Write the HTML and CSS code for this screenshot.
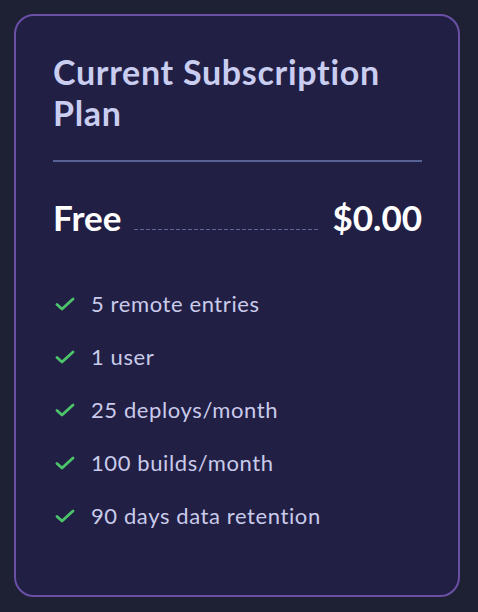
FILE: index.html
```html
<!DOCTYPE html>
<html>
<head>
<meta charset="utf-8">
<link rel="stylesheet" href="styles.css">
</head>
<body>
<div class="card">
  <h2 class="title">Current Subscription Plan</h2>
  <div class="divider"></div>
  <div class="plan">
    <span class="plan-name">Free</span>
    <span class="leader"></span>
    <span class="plan-price">$0.00</span>
  </div>
  <ul class="features">
    <li><svg class="check" viewBox="0 0 20 14" width="20" height="14"><path d="M2 7.5 L7 12 L18 2" fill="none" stroke="#4cc46a" stroke-width="2.8" stroke-linecap="round" stroke-linejoin="round"/></svg><span>5 remote entries</span></li>
    <li><svg class="check" viewBox="0 0 20 14" width="20" height="14"><path d="M2 7.5 L7 12 L18 2" fill="none" stroke="#4cc46a" stroke-width="2.8" stroke-linecap="round" stroke-linejoin="round"/></svg><span>1 user</span></li>
    <li><svg class="check" viewBox="0 0 20 14" width="20" height="14"><path d="M2 7.5 L7 12 L18 2" fill="none" stroke="#4cc46a" stroke-width="2.8" stroke-linecap="round" stroke-linejoin="round"/></svg><span>25 deploys/month</span></li>
    <li><svg class="check" viewBox="0 0 20 14" width="20" height="14"><path d="M2 7.5 L7 12 L18 2" fill="none" stroke="#4cc46a" stroke-width="2.8" stroke-linecap="round" stroke-linejoin="round"/></svg><span>100 builds/month</span></li>
    <li><svg class="check" viewBox="0 0 20 14" width="20" height="14"><path d="M2 7.5 L7 12 L18 2" fill="none" stroke="#4cc46a" stroke-width="2.8" stroke-linecap="round" stroke-linejoin="round"/></svg><span>90 days data retention</span></li>
  </ul>
</div>
</body>
</html>
```

FILE: styles.css
```css
html, body {
  margin: 0;
  padding: 0;
  background: #1e2133;
}
body {
  padding: 14px 18px 15px 14px;
  font-family: Lato, "Noto Sans", sans-serif;
}
.card {
  box-sizing: border-box;
  width: 446px;
  height: 583px;
  background: #221f45;
  border: 2px solid #6a4fa6;
  border-radius: 20px;
  padding: 35px 36px 0 37px;
}
.title {
  margin: 0;
  font-size: 34px;
  line-height: 41px;
  font-weight: 700;
  color: #c9cdf0;
  letter-spacing: 0.7px;
}
.divider {
  height: 2px;
  background: #586395;
  margin-top: 27px;
}
.plan {
  display: flex;
  align-items: flex-end;
  margin-top: 35px;
}
.plan-name, .plan-price {
  font-size: 35px;
  font-weight: 700;
  color: #ffffff;
  line-height: 40px;
}
.leader {
  flex: 1;
  height: 1px;
  margin: 0 13px 7px 13px;
  background: repeating-linear-gradient(90deg, #5a6498 0 4px, transparent 4px 6px);
}
.features {
  list-style: none;
  margin: 40px 0 0 0;
  padding: 0;
}
.features li {
  display: flex;
  align-items: center;
  height: 53px;
  line-height: 53px;
  font-size: 22px;
  letter-spacing: 0.6px;
  color: #c9cbea;
}
.check {
  margin-left: 2px;
  margin-right: 16px;
  flex: none;
}
```
